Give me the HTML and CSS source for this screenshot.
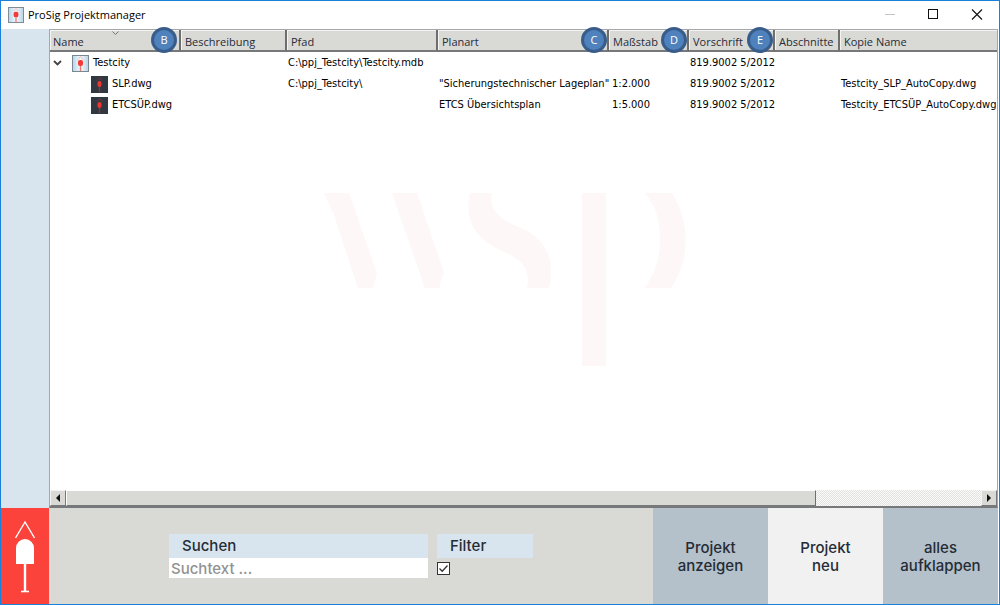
FILE: index.html
```html
<!DOCTYPE html>
<html lang="de">
<head>
<meta charset="utf-8">
<title>ProSig Projektmanager</title>
<link rel="stylesheet" href="styles.css">
</head>
<body>
<svg class="defs" aria-hidden="true">
  <defs>
    <linearGradient id="ice"><stop offset="0" stop-color="#b5d5ea"/><stop offset="0.5" stop-color="#f4fafd"/><stop offset="1" stop-color="#b9d3e6"/></linearGradient>
    <symbol id="project" viewBox="0 0 17 17">
      <rect x="0.500" y="0.500" width="16" height="16" fill="url(#ice)" stroke="#7b8790"/>
      <path d="M6 4.500L8.500 1.500L11 4.500" fill="none" stroke="#f7b5b2"/>
      <rect x="6" y="5" width="5" height="6" rx="2" fill="#f43b36"/>
      <path d="M8.500 11V16" stroke="#f27672" stroke-width="1.400"/>
    </symbol>
    <symbol id="drawing" viewBox="0 0 17 17">
      <rect width="17" height="17" fill="#303942"/>
      <path d="M6 4.500L8.500 1.500L11 4.500" fill="none" stroke="#74383b"/>
      <rect x="6.500" y="5" width="4" height="6" rx="2" fill="#ee3633"/>
      <path d="M8.500 11V16" stroke="#8f3537" stroke-width="1.400"/>
    </symbol>
  </defs>
</svg>
<div class="window">
  <header class="titlebar">
    <svg class="app-icon" viewBox="0 0 17 17" aria-hidden="true"><use href="#project"/></svg>
    <h1 class="title">ProSig Projektmanager</h1>
    <button class="win-button" type="button" aria-label="Minimieren" disabled><svg width="12" height="12"><path d="M1 5.500H11" stroke="#c4c4c4"/></svg></button>
    <button class="win-button" type="button" aria-label="Maximieren"><svg width="12" height="12"><rect x="0.500" y="0.500" width="9" height="9" fill="none" stroke="#111"/></svg></button>
    <button class="win-button" type="button" aria-label="Schließen"><svg width="12" height="12"><path d="M1 0.500L11 10.500M11 0.500L1 10.500" stroke="#111" stroke-width="1.100"/></svg></button>
  </header>
  <div class="main">
    <aside class="sidebar"></aside>
    <section class="list">
      <svg class="watermark" viewBox="0 0 362 176" aria-hidden="true">
        <g fill="#fdf7f7">
          <path d="M0 0H25L53 80L49 95H34L10 22Z"/>
          <path d="M68 0H93L120 80L115 95H101Z"/>
          <path d="M146 0H168C164 18 177 27 197 35C222 46 232 66 225 95H203C207 75 197 66 178 58C151 46 140 27 146 0Z"/>
          <path d="M258 0H282V173H258Z"/>
          <path d="M321 0H348C366 29 367 66 347 95H320C341 70 342 24 321 0Z"/>
        </g>
      </svg>
      <table class="projects">
        <colgroup><col class="c-name"><col class="c-desc"><col class="c-path"><col class="c-kind"><col class="c-scale"><col class="c-rule"><col class="c-part"><col></colgroup>
        <thead>
          <tr>
            <th scope="col">Name<svg class="sort" width="7" height="4" aria-hidden="true"><path d="M0.500 0.500L3.500 3.500L6.500 0.500" fill="none" stroke="#777"/></svg><span class="badge">B</span></th>
            <th scope="col">Beschreibung</th>
            <th scope="col">Pfad</th>
            <th scope="col">Planart<span class="badge">C</span></th>
            <th scope="col">Maßstab<span class="badge">D</span></th>
            <th scope="col">Vorschrift<span class="badge">E</span></th>
            <th scope="col">Abschnitte</th>
            <th scope="col">Kopie Name</th>
          </tr>
        </thead>
        <tbody>
          <tr>
            <td><div class="node"><button class="toggle" type="button" aria-label="Testcity zuklappen"><svg width="9" height="6"><path d="M1 1L4.500 4.500L8 1" fill="none" stroke="#444" stroke-width="1.800"/></svg></button><svg class="icon" viewBox="0 0 17 17" aria-hidden="true"><use href="#project"/></svg>Testcity</div></td>
            <td></td><td>C:\ppj_Testcity\Testcity.mdb</td><td></td><td></td><td>819.9002 5/2012</td><td></td><td></td>
          </tr>
          <tr>
            <td><div class="node child"><svg class="icon" viewBox="0 0 17 17" aria-hidden="true"><use href="#drawing"/></svg>SLP.dwg</div></td>
            <td></td><td>C:\ppj_Testcity\</td><td>"Sicherungstechnischer Lageplan"</td><td class="scale">1:2.000</td><td>819.9002 5/2012</td><td></td><td>Testcity_SLP_AutoCopy.dwg</td>
          </tr>
          <tr>
            <td><div class="node child"><svg class="icon" viewBox="0 0 17 17" aria-hidden="true"><use href="#drawing"/></svg>ETCSÜP.dwg</div></td>
            <td></td><td></td><td>ETCS Übersichtsplan</td><td class="scale">1:5.000</td><td>819.9002 5/2012</td><td></td><td>Testcity_ETCSÜP_AutoCopy.dwg</td>
          </tr>
        </tbody>
      </table>
      <div class="scrollbar">
        <button class="scroll-button" type="button" aria-label="Nach links"><svg width="6" height="8"><path d="M5 0V8L1 4Z" fill="#111"/></svg></button>
        <div class="track"><div class="thumb"></div></div>
        <button class="scroll-button" type="button" aria-label="Nach rechts"><svg width="6" height="8"><path d="M1 0V8L5 4Z" fill="#111"/></svg></button>
      </div>
    </section>
  </div>
  <footer class="footer">
    <div class="brand">
      <svg width="20" height="74" viewBox="0 0 20 74" aria-hidden="true">
        <path d="M0.500 19L10 3L19.500 19" fill="none" stroke="#fff" stroke-width="1.400"/>
        <path d="M1 45V29A9 9 0 0 1 19 29V45Z" fill="#fff"/>
        <path d="M10 45V72" stroke="#fff" stroke-width="2.400"/>
        <path d="M6 72.500H14" stroke="#fff" stroke-width="1.600"/>
      </svg>
    </div>
    <form class="tools">
      <div class="field search">
        <label class="caption" for="search">Suchen</label>
        <input class="search-input" id="search" type="text" placeholder="Suchtext ...">
      </div>
      <div class="field filter">
        <label class="caption" for="filter">Filter</label>
        <input class="check" id="filter" type="checkbox" checked>
      </div>
    </form>
    <button class="action" type="button">Projekt<br>anzeigen</button>
    <button class="action light" type="button">Projekt<br>neu</button>
    <button class="action" type="button">alles<br>aufklappen</button>
  </footer>
</div>
</body>
</html>
```
FILE: styles.css
```css
* { box-sizing: border-box; }
body { margin: 0; font-family: "Open Sans", "Noto Sans", sans-serif; }
button { margin: 0; padding: 0; border: 0; background: none; font: inherit; color: inherit; }
button svg { display: block; }
.defs { position: absolute; width: 0; height: 0; }

.window {
  display: flex;
  flex-direction: column;
  min-height: 100vh;
  padding-right: 1px;
  border: 1px solid #1a80d8;
  background: #fff;
}

.titlebar { display: flex; align-items: center; height: 28px; padding-left: 7px; }
.app-icon { width: 16px; height: 16px; }
.title {
  flex: 1;
  margin: 0 0 0 4px;
  font-size: 11px;
  font-weight: 400;
  line-height: 16px;
  color: #000;
}
.win-button { display: flex; align-items: center; justify-content: center; width: 44px; height: 28px; }
.win-button:last-child { width: 42px; }

.main { display: flex; flex: 1; }
.sidebar { width: 48px; background: #d8e5ee; }
.list {
  position: relative;
  display: flex;
  flex: 1;
  flex-direction: column;
  justify-content: space-between;
  min-width: 0;
  border: 1px solid #a4a7ac;
  border-bottom: 2px solid #77787a;
}
.watermark { position: absolute; top: 163px; left: calc(50% - 200px); width: 362px; height: 176px; }

.projects { position: relative; width: 100%; border-collapse: separate; border-spacing: 0; table-layout: fixed; }
.c-name { width: 131px; }
.c-desc { width: 106px; }
.c-path { width: 151px; }
.c-kind { width: 171px; }
.c-scale { width: 80px; }
.c-rule { width: 86px; }
.c-part { width: 65px; }
.projects th {
  position: relative;
  height: 22px;
  padding: 3px 0 0 4px;
  border-right: 2px solid #6e6e6e;
  border-bottom: 2px solid #77787a;
  background: #d9dad6;
  box-shadow: inset 1px 1px #f4f4f2;
  font-size: 11px;
  font-weight: 400;
  line-height: 16px;
  text-align: left;
  white-space: nowrap;
  color: #262b38;
}
.projects th:first-child { padding-left: 3px; }
.projects th:last-child { border-right: 0; }
.projects td {
  height: 21px;
  padding: 1px 0 0 1px;
  font-family: "DejaVu Sans Condensed", "DejaVu Sans", sans-serif;
  font-size: 11px;
  line-height: 16px;
  white-space: nowrap;
  color: #000;
}
.projects td:first-child,
.projects .scale { padding-left: 3px; }
.sort { position: absolute; top: 1px; left: 62px; }
.badge {
  position: absolute;
  top: -3px;
  right: 0;
  z-index: 1;
  width: 26px;
  height: 26px;
  border: 3px solid #385d8a;
  border-radius: 50%;
  background: #4f81bd;
  font-size: 11px;
  line-height: 20px;
  text-align: center;
  color: #fff;
}
th:first-child .badge { right: 2px; }
.node { display: flex; align-items: center; }
.child { padding-left: 38px; }
.icon { flex: none; width: 17px; height: 17px; margin-right: 4px; }
.toggle { width: 19px; }

.scrollbar { display: flex; height: 16px; }
.scroll-button {
  display: flex;
  align-items: center;
  justify-content: center;
  width: 16px;
  border: 1px solid;
  border-color: #f4f4f2 #77787a #77787a #f4f4f2;
  background: #d9dad6;
}
.track { flex: 1; background: repeating-conic-gradient(#e2e3e0 0 25%, #fafafa 0 50%) 0 0 / 2px 2px; }
.thumb {
  width: 82%;
  height: 100%;
  border: 1px solid;
  border-color: #fff #6e6e6e #77787a #fff;
  background: #d9dad6;
}

.footer { display: flex; min-height: 96px; background: #d9dad6; }
.brand { display: flex; align-items: center; justify-content: center; width: 48px; background: #fb433b; }
.tools {
  display: flex;
  flex: 1;
  gap: 9px;
  align-items: flex-start;
  padding: 26px 120px 0;
  font-family: Inter, sans-serif;
  font-size: 15px;
  font-weight: 500;
  color: #252c36;
}
.field { display: flex; flex-direction: column; align-items: flex-start; }
.search { flex: 1; }
.filter { width: 96px; }
.caption { width: 100%; padding: 0 13px; background: #d8e5ee; line-height: 24px; }
.search-input {
  width: 100%;
  height: 20px;
  padding: 0 2px;
  border: 0;
  background: #fff;
  font: inherit;
  color: inherit;
}
.search-input::placeholder { color: #929292; opacity: 1; }
.check {
  appearance: none;
  width: 13px;
  height: 13px;
  margin: 4px 0 0;
  border: 1px solid #333;
  background: #fff;
}
.check:checked {
  background: #fff url("data:image/svg+xml,%3Csvg xmlns='http://www.w3.org/2000/svg' viewBox='0 0 11 11'%3E%3Cpath d='M1.500 5.500L4.200 8.200L9.500 2.500' fill='none' stroke='%23333' stroke-width='1.300'/%3E%3C/svg%3E");
}
.action {
  width: 115px;
  padding-top: 2px;
  background: #b4c0ca;
  font-family: Inter, sans-serif;
  font-size: 15px;
  font-weight: 500;
  line-height: 18px;
  color: #252c36;
}
.light { background: #f1f1f1; }
```
